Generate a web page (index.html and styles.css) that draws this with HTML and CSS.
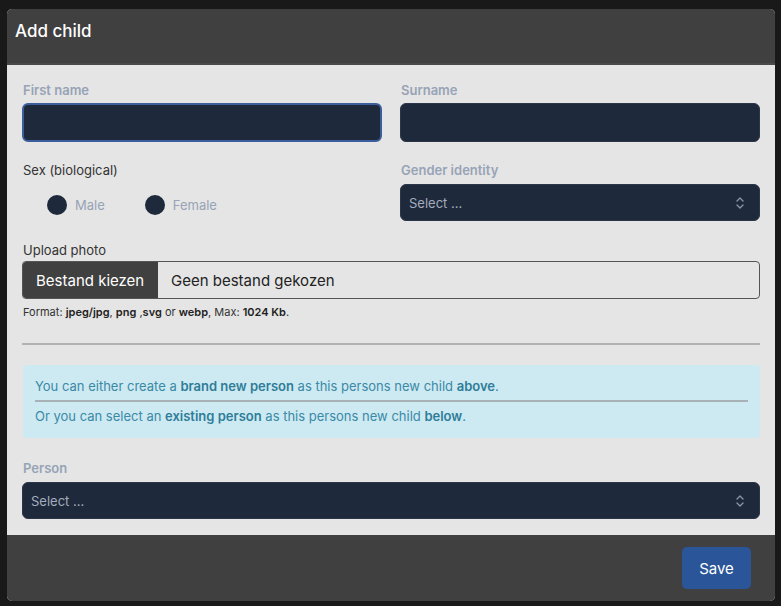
FILE: index.html
```html
<!DOCTYPE html>
<html lang="en">
<head>
<meta charset="utf-8">
<title>Add child</title>
<link rel="stylesheet" href="styles.css">
</head>
<body>
<div class="modal">
  <div class="modal-header">Add child</div>
  <div class="modal-body">
    <div class="grid">
      <div class="field">
        <div class="label muted">First name</div>
        <div class="input focused"></div>
      </div>
      <div class="field">
        <div class="label muted">Surname</div>
        <div class="input"></div>
      </div>
    </div>
    <div class="grid row2">
      <div class="field">
        <div class="label plain">Sex (biological)</div>
        <div class="radios">
          <div class="radio"><span class="dot"></span><span class="rlabel">Male</span></div>
          <div class="radio"><span class="dot"></span><span class="rlabel">Female</span></div>
        </div>
      </div>
      <div class="field">
        <div class="label muted">Gender identity</div>
        <div class="select">
          <span class="placeholder">Select ...</span>
          <svg class="chev" width="10" height="14" viewBox="0 0 10 14"><path d="M2 5 L5 2 L8 5 M2 9 L5 12 L8 9" fill="none" stroke="#8a94a6" stroke-width="1.4" stroke-linecap="round" stroke-linejoin="round"/></svg>
        </div>
      </div>
    </div>
    <div class="field upload">
      <div class="label plain">Upload photo</div>
      <div class="file">
        <span class="file-btn">Bestand kiezen</span>
        <span class="file-name">Geen bestand gekozen</span>
      </div>
      <div class="hint">Format: <b>jpeg/jpg</b>, <b>png</b> ,<b>svg</b> or <b>webp</b>, Max: <b>1024 Kb</b>.</div>
    </div>
    <div class="rule"></div>
    <div class="info">
      <div class="info-line">You can either create a <b>brand new person</b> as this persons new child <b>above</b>.</div>
      <div class="info-rule"></div>
      <div class="info-line">Or you can select an <b>existing person</b> as this persons new child <b>below</b>.</div>
    </div>
    <div class="field person">
      <div class="label muted">Person</div>
      <div class="select">
        <span class="placeholder">Select ...</span>
        <svg class="chev" width="10" height="14" viewBox="0 0 10 14"><path d="M2 5 L5 2 L8 5 M2 9 L5 12 L8 9" fill="none" stroke="#8a94a6" stroke-width="1.4" stroke-linecap="round" stroke-linejoin="round"/></svg>
      </div>
    </div>
  </div>
  <div class="modal-footer">
    <button class="save">Save</button>
  </div>
</div>
</body>
</html>
```

FILE: styles.css
```css
html, body {
  margin: 0;
  height: 100%;
}
body {
  background: #19191a;
  padding: 9px 6px 5px 7px;
  box-sizing: border-box;
  font-family: Inter, "Noto Sans", sans-serif;
}
.modal {
  width: 768px;
  border-radius: 5px;
  overflow: hidden;
  background: #e5e5e5;
}
.modal-header {
  background: #404040;
  color: #fff;
  box-sizing: border-box;
  padding: 11px 8px 0 8px;
  font-size: 17px;
  font-weight: 500;
  line-height: 22px;
  border-bottom: 2px solid #4a4a4a;
  height: 56px;
}
.modal-body {
  padding: 15px 15px 16px 15px;
}
.grid {
  display: grid;
  grid-template-columns: 360px 360px;
  column-gap: 18px;
}
.row2 {
  margin-top: 18px;
}
.label {
  font-size: 13px;
  line-height: 20px;
  padding-left: 1px;
}
.muted {
  color: #97a3b6;
  font-weight: 600;
}
.plain {
  color: #333;
  font-weight: 400;
}
.input {
  margin-top: 3px;
  height: 39px;
  box-sizing: border-box;
  background: #1e293b;
  border: 1px solid #2b3648;
  border-radius: 6px;
}
.input.focused {
  border: 2px solid #3c5e9c;
}
.radios {
  display: flex;
  gap: 40px;
  margin-top: 15px;
  padding-left: 25px;
}
.radio {
  display: flex;
  align-items: center;
  gap: 8px;
}
.dot {
  width: 20px;
  height: 20px;
  border-radius: 50%;
  background: #1e293b;
}
.rlabel {
  color: #97a3b6;
  font-size: 13px;
  line-height: 20px;
}
.select {
  margin-top: 4px;
  height: 37px;
  box-sizing: border-box;
  background: #1e293b;
  border: 1px solid #2b3648;
  border-radius: 6px;
  display: flex;
  align-items: center;
  justify-content: space-between;
  padding: 0 14px 0 8px;
}
.placeholder {
  color: #a3adbd;
  font-size: 13px;
}
.upload {
  margin-top: 19px;
}
.file {
  margin-top: 1px;
  height: 38px;
  box-sizing: border-box;
  border: 1px solid #555;
  border-radius: 4px;
  display: flex;
  overflow: hidden;
}
.file-btn {
  background: #404040;
  color: #fff;
  font-size: 15px;
  display: flex;
  align-items: center;
  padding: 0 13px;
  width: 135px;
  box-sizing: border-box;
}
.file-name {
  color: #222;
  font-size: 15px;
  display: flex;
  align-items: center;
  padding-left: 13px;
}
.hint {
  margin-top: 5px;
  padding-left: 1px;
  font-size: 11px;
  line-height: 16px;
  color: #333;
}
.hint b {
  color: #222;
  font-weight: 600;
}
.rule {
  margin-top: 23px;
  height: 2px;
  background: #b2b2b2;
}
.info {
  margin-top: 20px;
  margin-left: 1px;
  background: #cde9f2;
  border-radius: 4px;
  padding: 11px 12px 12px 12px;
}
.info-line {
  color: #3a8aa6;
  font-size: 13px;
  line-height: 20px;
}
.info-line b {
  color: #2e7d99;
  font-weight: 600;
}
.info-rule {
  height: 2px;
  background: #a8b2b6;
  margin: 4px 0 4px 0;
}
.person {
  margin-top: 20px;
}
.modal-footer {
  background: #404040;
  height: 66px;
  box-sizing: border-box;
  display: flex;
  justify-content: flex-end;
  align-items: flex-start;
  padding: 12px 24px 0 0;
}
.save {
  width: 69px;
  height: 42px;
  border: none;
  border-radius: 5px;
  background: #2a5599;
  color: #fff;
  font-family: Inter, "Noto Sans", sans-serif;
  font-size: 15px;
}
```
